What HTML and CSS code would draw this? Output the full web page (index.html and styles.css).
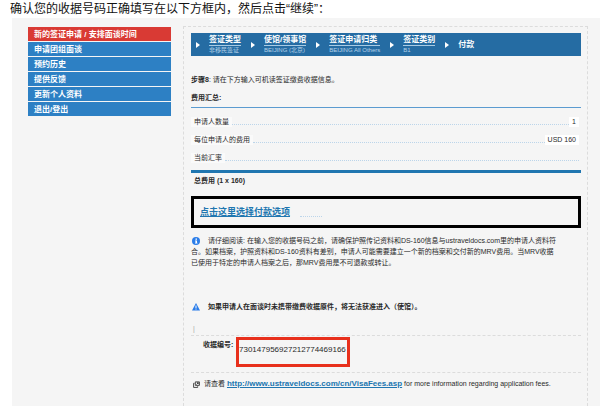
FILE: index.html
```html
<!DOCTYPE html>
<html lang="zh-CN">
<head>
    <meta charset="UTF-8">
    <meta name="viewport" content="width=device-width, initial-scale=1.0">
    <title>付款</title>
    <link rel="stylesheet" href="styles.css">
</head>
<body>
    <p class="intro">确认您的收据号码正确填写在以下方框内，然后点击“继续”：</p>
    <div class="page">
        <nav class="sidebar">
            <a class="active" href="#">新的签证申请 / 安排面谈时间</a>
            <a href="#">申请团组面谈</a>
            <a href="#">预约历史</a>
            <a href="#">提供反馈</a>
            <a href="#">更新个人资料</a>
            <a href="#">退出/登出</a>
        </nav>
        <main class="content">
            <ol class="steps">
                <li><div><a href="#">签证类型</a><span>非移民签证</span></div></li>
                <li><div><a href="#">使馆/领事馆</a><span>BEIJING (北京)</span></div></li>
                <li><div><a href="#">签证申请归类</a><span>BEIJING All Others</span></div></li>
                <li><div><a href="#">签证类别</a><span>B1</span></div></li>
                <li><strong>付款</strong></li>
            </ol>

            <p class="step-text"><strong>步骤8</strong>: 请在下方输入可机读签证缴费收据信息。</p>
            <h2>费用汇总:</h2>
            <dl class="fees">
                <div class="row"><dt>申请人数量</dt><dd>1</dd></div>
                <div class="row"><dt>每位申请人的费用</dt><dd>USD 160</dd></div>
                <div class="row"><dt>当前汇率</dt></div>
            </dl>
            <p class="total">总费用 (1 x 160)</p>

            <div class="options">
                <a href="#">点击这里选择付款选项</a>
                <span class="dots"></span>
            </div>

            <p class="note">
                <svg class="icon" viewBox="0 0 16 16"><circle cx="8" cy="8" r="8" fill="#2b7de9"/><path d="M7 3h3v2.500H7zM6 7h4v4.500h1V13H6v-1.500h1v-3H6z" fill="#fff"/></svg>请仔细阅读: 在输入您的收据号码之前，请确保护照传记资料和DS-160信息与ustraveldocs.com里的申请人资料符<br>合。如果档案，护照资料和DS-160资料有差别，申请人可能需要建立一个新的档案和交付新的MRV费用。当MRV收据<br>已使用于特定的申请人档案之后，那MRV费用是不可退款或转让。
            </p>
            <p class="warning">
                <svg class="icon" viewBox="0 0 16 16"><path d="M8 0l8 15H0z" fill="#2b7de9"/><path d="M7 5h2v5H7zM7 11h2v2H7z" fill="#fff"/></svg>如果申请人在面谈时未携带缴费收据原件，将无法获准进入（使馆）。
            </p>
            <p class="bar">|</p>

            <form class="receipt">
                <label for="receipt">收据编号:</label>
                <input type="text" id="receipt" value="730147956927212774469166">
            </form>

            <p class="more">
                <svg class="popup" viewBox="0 0 12 12"><path d="M4 1.500h7v6H4z" fill="#fff" stroke="#333" stroke-width="1.500"/><path d="M2.500 4H1v7h7V9M6 6l3-3M6.500 3H9v2.500" fill="none" stroke="#333" stroke-width="1.500"/></svg>请查看 <a href="http://www.ustraveldocs.com/cn/VisaFees.asp">http://www.ustraveldocs.com/cn/VisaFees.asp</a> for more information regarding application fees.
            </p>
        </main>
    </div>
</body>
</html>
```
FILE: styles.css
```css
:root {
    --panel: #f5f5f5;
    --blue: #2d80c4;
    --dark-blue: #256ca3;
    --link: #2076b0;
    --text: #2a2a2a;
    --dash: #dcdcdc;
}

* {
    box-sizing: border-box;
}
body {
    margin: 0;
    min-height: 100vh;
    display: flex;
    flex-direction: column;
    background-color: #fff;
    color: var(--text);
    font-family: "Liberation Sans", "Noto Sans CJK SC", sans-serif;
    font-size: 7px;
    line-height: 10px;
}
p, h2, ol, dl, dd {
    margin: 0;
    padding: 0;
}
.intro {
    padding-left: 10px;
    font-size: 12px;
    line-height: 18px;
    color: #111;
}
.page {
    flex: 1;
    display: flex;
    align-items: stretch;
    gap: 12px;
    margin-left: 12px;
    padding: 8px 12px 0 16px;
    background-color: var(--panel);
}

/* left menu */
.sidebar {
    flex: 0 0 143px;
    display: flex;
    flex-direction: column;
    gap: 1px;
    padding-top: 1px;
}
.sidebar a {
    padding: 2px 0 0 6px;
    background-color: var(--blue);
    color: #fff;
    font-size: 8px;
    font-weight: bold;
    line-height: 12px;
    text-decoration: none;
}
.sidebar .active {
    background-color: #d93a34;
}

.content {
    flex: 1;
    min-width: 0;
    padding: 6px 6px 0 7px;
    border: 1px dashed var(--dash);
    border-bottom: none;
}

/* breadcrumb */
.steps {
    display: flex;
    align-items: center;
    gap: 10px;
    height: 23px;
    padding-left: 5px;
    background-color: var(--dark-blue);
    color: #fff;
    list-style: none;
    white-space: nowrap;
}
.steps li {
    display: flex;
    align-items: center;
    gap: 9px;
    font-size: 8px;
}
.steps li::before {
    content: "";
    border: 3px solid transparent;
    border-left: 4px solid #fff;
    border-right: none;
}
.steps a {
    display: block;
    border-bottom: 1px solid #a9cbe4;
    color: #fff;
    font-weight: bold;
    text-decoration: none;
}
.steps span {
    display: block;
    color: #b5d2e8;
    font-size: 6px;
    line-height: 9px;
}

.step-text {
    margin-top: 19px;
}
h2 {
    margin-top: 8px;
    padding-bottom: 4px;
    border-bottom: 1px solid #5b9bd0;
    font-size: 7px;
}
.fees {
    padding: 5px 2px 3px 0;
    border-bottom: 3px solid var(--link);
}
.row {
    display: flex;
    align-items: center;
    height: 18px;
}
.row::after {
    content: "";
    order: 1;
    flex: 1;
    margin-top: 5px;
    border-bottom: 1px dotted #bcd5ea;
}
.row dt, .row dd {
    padding: 0 3px;
    background-color: #fafafa;
}
.row dd {
    order: 2;
    background-color: #fff;
}
.total {
    padding: 3px;
    font-weight: bold;
}

.options {
    display: flex;
    align-items: center;
    gap: 10px;
    height: 32px;
    margin-top: 7px;
    padding-left: 6px;
    border: 3px solid #000;
}
.options a {
    font-size: 9px;
    font-weight: bold;
}
.dots {
    width: 22px;
    margin-top: 9px;
    border-bottom: 1px dotted #bcd5ea;
}
a {
    color: var(--link);
}

.note {
    margin-top: 7px;
    line-height: 11px;
    white-space: nowrap;
}
.icon {
    width: 8px;
    height: 8px;
    margin: 0 8px 0 1px;
    vertical-align: middle;
}
.warning {
    margin-top: 34px;
    font-weight: bold;
}
.bar {
    margin-top: 12px;
    padding-left: 2px;
    color: #aaa;
}

.receipt {
    display: flex;
    align-items: flex-start;
    margin-top: 1px;
    padding: 1px 0 5px 12px;
    border-top: 1px dashed var(--dash);
    border-bottom: 1px dashed var(--dash);
}
.receipt label {
    padding-top: 3px;
    font-weight: bold;
    width: 33px;
}
.receipt input {
    width: 114px;
    height: 30px;
    padding: 0 0 6px;
    border: 3px solid #e8301c;
    border-radius: 0;
    background-color: var(--panel);
    color: var(--text);
    font-family: inherit;
    font-size: 8px;
}
.more {
    margin-top: 6px;
    white-space: nowrap;
}
.more a {
    font-size: 8px;
    font-weight: bold;
}
.popup {
    width: 7px;
    height: 7px;
    margin: 0 4px 0 2px;
    vertical-align: middle;
}
```
